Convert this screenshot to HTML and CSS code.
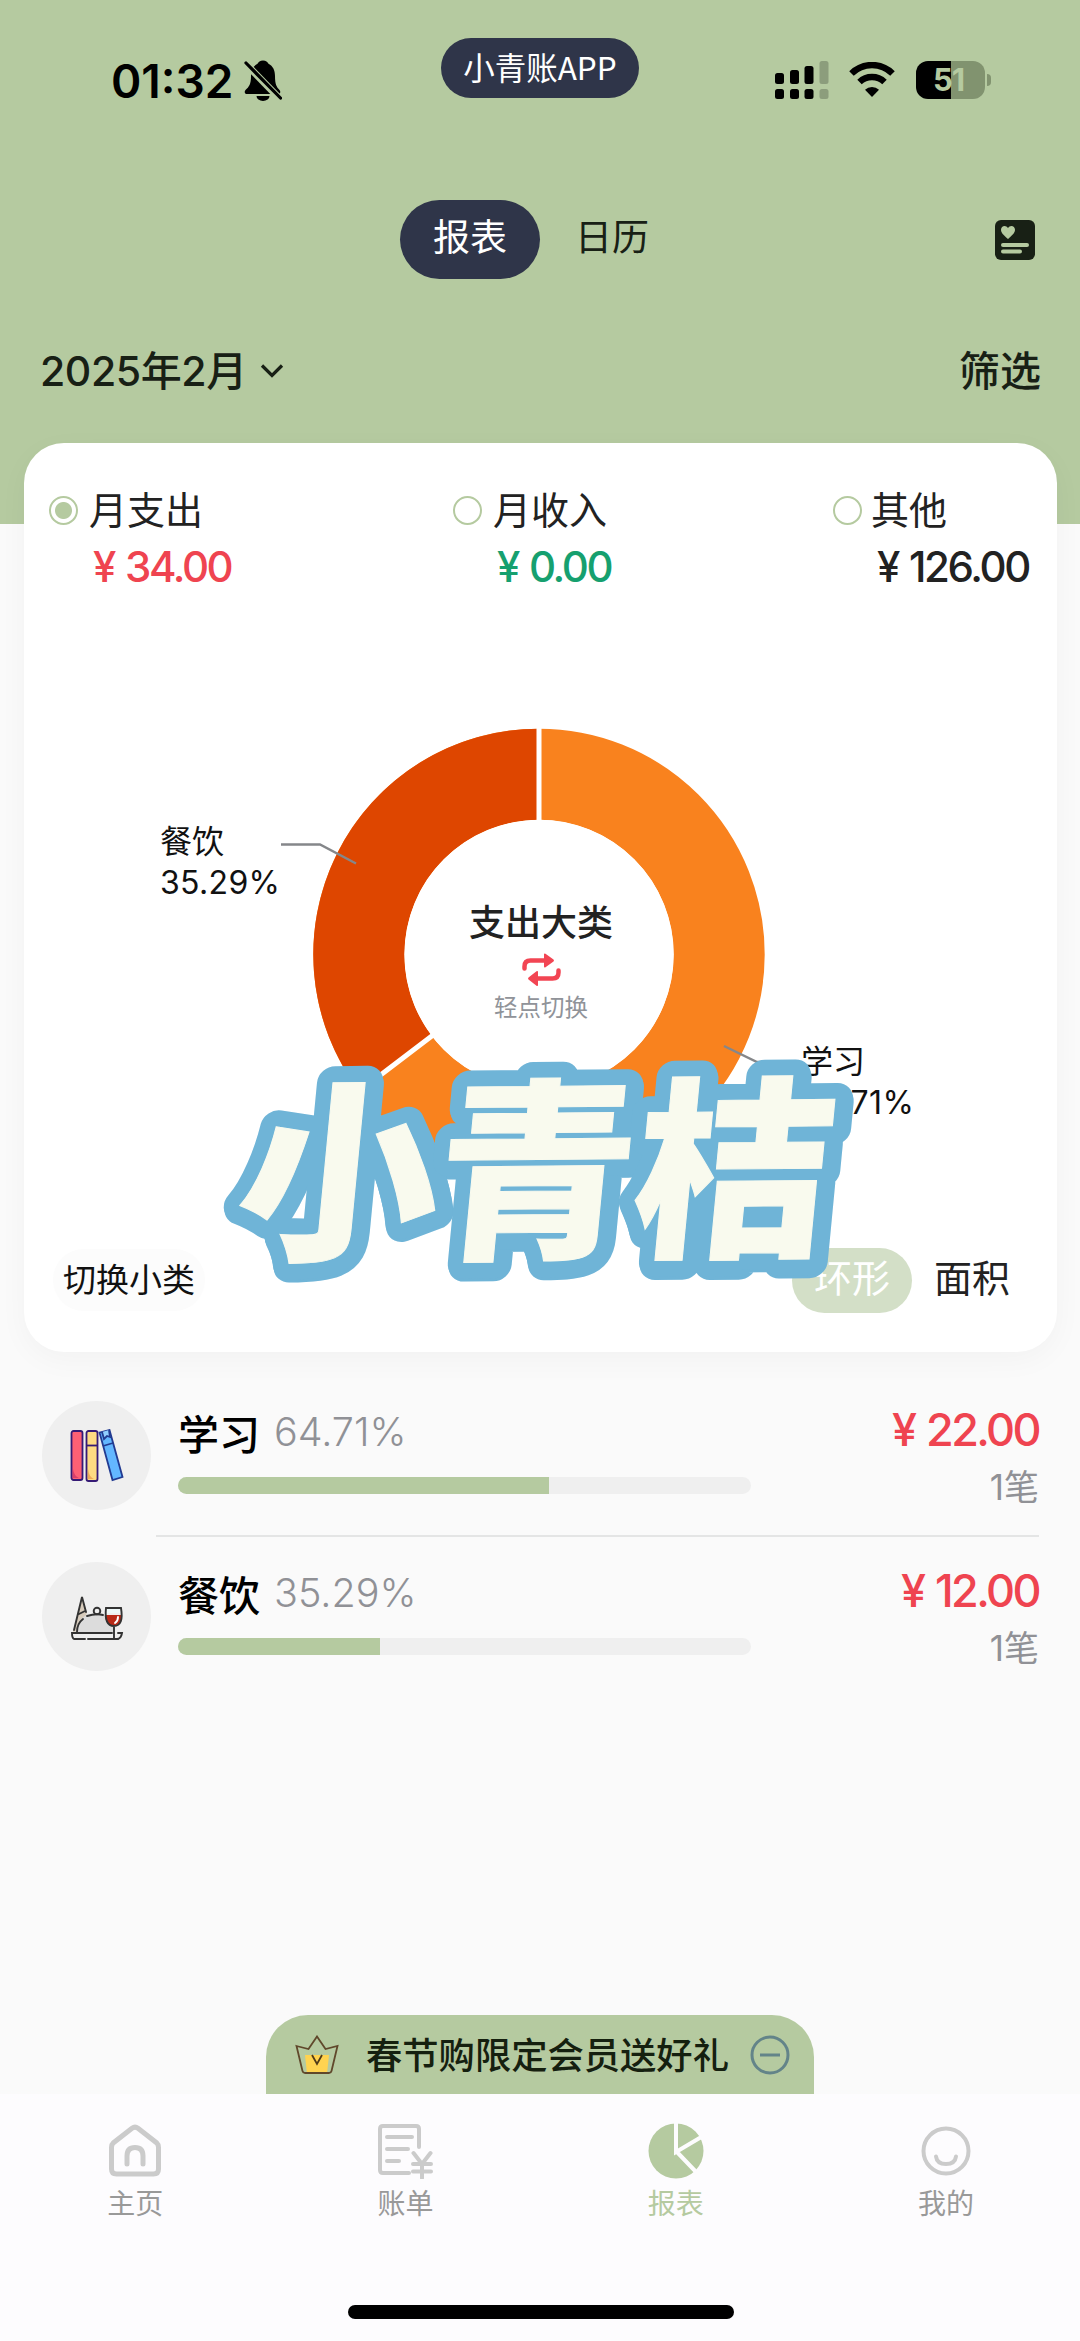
FILE: index.html
```html
<!DOCTYPE html>
<html lang="zh-CN">
<head>
<meta charset="utf-8">
<title>小青账</title>
<link rel="stylesheet" href="styles.css">
</head>
<body>
<div class="screen">
  <header class="top">
    <div class="status">
      <div class="clock">01:32
        <svg class="bell" viewBox="0 0 38 41" width="38" height="41"><path d="M19 .5c-3 0-4.500 1.500-5.500 3.300C9 6 7 10.500 7 16c0 8-2 11-5.500 14-1.500 1.700-.8 4 1.500 4h31c2.300 0 3-2.300 1.500-4-3-3-4.500-6-4.500-14 0-5.500-2-10-6.500-12.200C23.500 2 22 .5 19 .5zM12.500 36a6.500 5 0 0 0 13 0z"/><path class="slash-gap" d="M3 5l34 35"/><path class="slash" d="M2 3l34.500 35"/></svg>
      </div>
      <div class="app-pill">小青账APP</div>
      <div class="signals">
        <svg width="54" height="38" viewBox="0 0 54 38"><g><rect x="0" y="12" width="9" height="11" rx="2.500"/><rect x="15" y="9" width="9" height="14" rx="2.500"/><rect x="29.500" y="5" width="9" height="18" rx="2.500"/><rect x="0" y="28" width="9" height="10" rx="2.500"/><rect x="15" y="28" width="9" height="10" rx="2.500"/><rect x="29.500" y="28" width="9" height="10" rx="2.500"/></g><g opacity=".22"><rect x="44.500" y="0" width="9" height="23" rx="2.500"/><rect x="44.500" y="28" width="9" height="10" rx="2.500"/></g></svg>
        <svg width="46" height="36" viewBox="0 0 46 36"><g fill="none" stroke="#000" stroke-width="6.400"><path d="M2.500 11.500a29 29 0 0 1 41 0"/><path d="M10.500 20a18 18 0 0 1 25 0"/></g><path d="M23 35l-7-7.200a10 10 0 0 1 14 0z"/></svg>
        <div class="battery"><span>51</span></div>
      </div>
    </div>
    <div class="tabs">
      <span class="tab tab-on">报表</span><span class="tab">日历</span>
      <svg class="card-icon" width="40" height="40" viewBox="0 0 40 40"><rect width="40" height="40" rx="6" fill="#182015"/><g fill="#b5caa0"><path d="M13 19C9 15.500 6 13 6 9.800 6 5.500 11 4.500 13 8c2-3.500 7-2.500 7 1.800C20 13 17 15.500 13 19z"/><rect x="6" y="23" width="28" height="4" rx="2"/><rect x="6" y="29.500" width="21" height="4" rx="2"/></g></svg>
    </div>
    <div class="filter">
      <span class="month">2025年2月</span>
      <svg class="chev" width="24" height="16" viewBox="0 0 24 16"><path d="M2 2.500l10 10 10-10"/></svg>
      <span class="choose">筛选</span>
    </div>
  </header>

  <main>
    <section class="card">
      <div class="totals">
        <div class="total"><i class="radio on"></i><b>月支出</b><em class="red"><u>¥</u>34.00</em></div>
        <div class="total"><i class="radio"></i><b>月收入</b><em class="green"><u>¥</u>0.00</em></div>
        <div class="total"><i class="radio"></i><b>其他</b><em><u>¥</u>126.00</em></div>
      </div>
      <svg class="chart" width="1033" height="600" viewBox="24 640 1033 600">
        <circle cx="539" cy="954.400" r="180.200" fill="none" stroke="#f9821e" stroke-width="91"/>
        <path d="M539 728.700A225.700 225.700 0 0 0 359.400 1091.100L431.900 1035.900A134.600 134.600 0 0 1 539 819.800z" fill="#de4600"/>
        <path d="M539 954.400V720M539 954.400L353 1096" stroke="#fff" stroke-width="5"/>
        <circle cx="539" cy="954.400" r="134.600" fill="#fff"/>
        <g fill="none" stroke="#85878a" stroke-width="2.500"><path d="M281 844.500h39l36 19M724 1046l33 16h40"/></g>
        <g class="chart-label"><text x="160" y="853">餐饮</text><text x="160" y="894" textLength="120">35.29%</text><text x="801" y="1073">学习</text><text x="801" y="1114" textLength="113">64.71%</text></g>
        <text class="chart-title" x="541" y="936">支出大类</text>
        <g class="swap" transform="translate(521 953)"><path class="line" d="M3.500 15.500v-2q0-6 6-6h15M37.500 17.500v2q0 6-6 6H15"/><path d="M23 1.500q0-1.500 1.500-.8l8 5.800q1 1 0 2l-8 5.800q-1.500.7-1.500-.8zM17 19q0-1.500-1.500-.8l-8 6.300q-1 1 0 2l8 6.300q1.500.7 1.500-.8z"/></g>
        <text class="chart-sub" x="541" y="1016">轻点切换</text>
      </svg>
      <div class="actions">
        <span class="switch">切换小类</span><span class="ring">环形</span><span class="area">面积</span>
      </div>
      <svg class="brand" width="660" height="400" viewBox="210 960 660 400">
        <g transform="translate(333 1245) rotate(-.5) skewX(-6) scale(1.03 .99)">
          <g class="brand-edge"><text x="2" y="3">小</text><text x="194" y="3">青</text><text x="386" y="3">桔</text></g>
          <g class="brand-edge"><text x="1" y="0">小</text><text x="193" y="0">青</text><text x="385" y="0">桔</text></g>
          <g class="brand-fill"><text x="0" y="0">小</text><text x="192" y="0">青</text><text x="384" y="0">桔</text></g>
        </g>
      </svg>
    </section>

    <section class="list">
      <div class="row">
        <div class="avatar"><svg width="54" height="54" viewBox="0 0 54 54" stroke="#351a75" stroke-width="1.800"><rect x="1.500" y="2" width="11" height="49" rx="2" fill="#fd6074"/><path d="M3 40v9h6q-5-2-6-9z" fill="#d93f6b" stroke="none"/><rect x="16.500" y="2" width="11" height="50" rx="2" fill="#fedb82"/><path d="M16.500 16.500h11"/><path d="M18 40v10h6q-5-2-6-10z" fill="#efaa59" stroke="none"/><g stroke="#223b91"><path d="M29.500 3.500l10-2.500 13 47-10 3z" fill="#63b7ff"/><path d="M33 17l10-3"/><path d="M32 3l2 7 3-3 3 1-1-7" fill="#91cfff"/></g></svg></div>
        <div class="mid"><div class="name"><b>学习</b><span class="p1">64.71%</span></div><div class="bar"><i style="width:64.71%"></i></div></div>
        <div class="right"><strong><u>¥</u>22.00</strong><span>1笔</span></div>
      </div>
      <div class="row">
        <div class="avatar"><svg width="54" height="54" viewBox="0 0 54 54" fill="none" stroke="#333" stroke-width="1.900" stroke-linecap="round"><path d="M3 42L12 6l5 17-8 18z" fill="#d7cbbb" stroke="none"/><path d="M4 40L12 7l4 15M9 24l6-3"/><path d="M6 43c0-13 8-19 20-19s19 7 19 19z" fill="#dcdcdc" stroke="none"/><path d="M7 42c0-5 2-10 6-13M17 26q9-3 16-1"/><circle cx="27" cy="21" r="3.300"/><path d="M35 25h17c0 7-3 11-8 11s-9-4-9-11z" fill="#b92917" stroke="none"/><path d="M36 18h15q3 18-7 18t-8-18zM44 36v12M40 49h8"/><path d="M37 19h13v4H37z" fill="#eef8f8" stroke="none"/><path d="M48 27q0 4-3 6" stroke="#fff"/><path d="M15 49H4q-2-1-2-6h40M18 49h29q4 0 5-6h-4"/></svg></div>
        <div class="mid"><div class="name"><b>餐饮</b><span>35.29%</span></div><div class="bar"><i style="width:35.29%"></i></div></div>
        <div class="right"><strong><u>¥</u>12.00</strong><span>1笔</span></div>
      </div>
    </section>
  </main>

  <div class="promo">
    <svg width="44" height="40" viewBox="0 0 44 40"><path d="M10 20h24l-2 19H12z" fill="#ffd350"/><path d="M1.500 11l12 3L22 1.500 30.500 14l12-3-6 25q-.5 2-2.500 2H10q-2 0-2.500-2z" fill="none" stroke="#60482b" stroke-width="1.800"/><path d="M17 20l5 9 5-9" fill="none" stroke="#503a18" stroke-width="1.800"/></svg>
    <span>春节购限定会员送好礼</span>
    <svg width="40" height="40" viewBox="0 0 40 40" fill="none" stroke="#638489" stroke-width="3"><circle cx="20" cy="20" r="18"/><path d="M10 20h20"/></svg>
  </div>

  <nav class="nav">
    <div class="items">
      <div class="item"><svg width="56" height="56" viewBox="0 0 56 56"><path d="M4.500 24.500q0-3 2-4.800L25 5.200q3-2.200 6 0l18.500 14.500q2 1.800 2 4.800V46q0 5-5 5h-37q-5 0-5-5z"/><path d="M20 41V33q0-8.500 8-8.500t8 8.500v8"/></svg>主页</div>
      <div class="item"><svg class="thin" width="56" height="56" viewBox="0 0 56 56"><path d="M42 24V6q0-3-3-3H6Q3 3 3 6v41q0 3 3 3h26M10 14h25M10 26h21M10 38h12M36.500 30l8.500 11 8.500-11M36 41h18M36 48.500h18M45 41v14"/></svg>账单</div>
      <div class="item on"><svg width="56" height="56" viewBox="0 0 56 56"><circle class="disk" cx="28" cy="28" r="27.500"/><path class="cut" d="M28 0v29l27-16M28 28l22 23"/></svg>报表</div>
      <div class="item"><svg class="thin" width="56" height="56" viewBox="0 0 56 56"><circle cx="28" cy="28" r="22.500"/><path d="M18 33.500q1 7.500 10 7.500t10-7.500"/></svg>我的</div>
    </div>
    <div class="home"></div>
  </nav>
</div>
</body>
</html>
```
FILE: styles.css
```css
* { box-sizing: border-box; }
body { margin: 0; background: #fafafa; font-family: Inter, "Noto Sans CJK SC", sans-serif; color: #222; }
b, em, i, strong { font-style: normal; font-weight: 400; }
u { text-decoration: none; }
svg { display: block; flex: none; }
.screen { width: 1080px; height: 2341px; overflow: hidden; display: flex; flex-direction: column; background: #fafafa; }

.top { height: 524px; flex: none; background: #b5caa0; color: #182015; }
.status { height: 136px; display: grid; grid-template-columns: 441px 198px 1fr; color: #000; }
.clock { display: flex; align-items: center; gap: 11px; padding: 25px 0 0 111px; font-size: 46px; font-weight: 600; height: 136px; white-space: nowrap; }
.slash { fill: none; stroke: #000; stroke-width: 3.200; stroke-linecap: round; }
.slash-gap { fill: none; stroke: #b5caa0; stroke-width: 7; }
.app-pill { margin-top: 38px; height: 60px; border-radius: 30px; background: #2f3549; color: #fff; font: 400 31.500px/57px "Noto Sans CJK SC", sans-serif; text-align: center; white-space: nowrap; }
.signals { display: flex; align-items: flex-start; padding: 61px 0 0 136px; }
.signals svg:nth-child(2) { margin: 1px 0 0 20px; }
.battery { position: relative; width: 69px; height: 38px; margin-left: 21px; border-radius: 12px; background: linear-gradient(90deg, #000 51%, #81936f 51%); color: #b5caa0; font-size: 31px; font-weight: 700; line-height: 38px; text-align: center; letter-spacing: -1px; }
.battery span { margin-right: 4px; }
.battery::after { content: ""; position: absolute; left: 71px; top: 13px; width: 4px; height: 12px; border-radius: 0 4px 4px 0; background: #81936f; }

.tabs { display: flex; align-items: center; margin-top: 63px; height: 80px; padding: 0 45px 0 400px; font: 400 37px/1 "Noto Sans CJK SC", sans-serif; }
.tab { padding-bottom: 7px; margin-left: 35px; }
.tab-on { width: 140px; height: 79px; margin: 0; padding: 0; border-radius: 40px; background: #2f3549; color: #fff; line-height: 71px; text-align: center; }
.card-icon { margin: 2px 0 0 auto; }
.filter { display: flex; align-items: center; height: 60px; margin-top: 62px; padding: 0 39px 0 40px; font-size: 41px; line-height: 60px; }
.month { width: 205px; white-space: nowrap; font-weight: 500; font-size: 41px; letter-spacing: -.4px; }
.chev { margin-left: 15px; fill: none; stroke: #182015; stroke-width: 3.200; }
.choose { margin-left: auto; font-weight: 500; }

.card { position: relative; width: 1033px; height: 909px; margin: -81px 0 0 24px; border-radius: 40px; background: #fff; box-shadow: 0 8px 30px rgba(0,0,0,.035); }
.totals { height: 197px; padding-top: 40px; display: grid; grid-template-columns: 404px 380px 1fr; }
.total { display: grid; grid-template-columns: 41px 1fr; grid-template-rows: 54px 58px; align-content: start; padding-left: 25px; align-items: center; }
.radio { width: 29px; height: 29px; border: 2.500px solid #b5caa0; border-radius: 50%; }
.on.radio { background: radial-gradient(circle, #b5caa0 8px, #fff 9px); }
.total b { font-size: 38px; line-height: 54px; white-space: nowrap; margin: -1px 0 0 -1px; }
.total:nth-child(3) b { margin-left: -3px; }
.total em { grid-column: 2; padding: 2px 0 0 3px; font-size: 42px; font-weight: 500; line-height: 58px; letter-spacing: -2.400px; white-space: nowrap; }
.total u { display: inline-block; width: 32px; }
.red { color: #ef4450; }
.green { color: #16a06f; }
.chart { height: 600px; }
.chart-label { font-size: 32px; fill: #111; }
.chart-title { font-size: 36px; font-weight: 500; text-anchor: middle; fill: #222; }
.chart-sub { font-size: 23.500px; text-anchor: middle; fill: #909399; }
.swap { fill: #f24553; }
.swap .line { fill: none; stroke: #f24553; stroke-width: 4.500; stroke-linecap: round; }
.actions { display: flex; align-items: center; height: 66px; margin-top: 7px; padding: 0 47px 0 29px; }
.switch { width: 152px; height: 62px; border-radius: 31px; background: #fcfcfc; font-size: 33px; line-height: 62px; text-align: center; color: #111; white-space: nowrap; }
.ring { width: 120px; height: 65px; margin-left: auto; border-radius: 33px; background: #d3dfc7; color: #fff; font-size: 38px; line-height: 60px; text-align: center; }
.area { margin-left: 22px; font-size: 38px; line-height: 60px; margin-top: -5px; }
.brand { position: absolute; left: 186px; top: 517px; overflow: visible; }
.brand text { font: 900 195px/1 "Noto Sans CJK SC", sans-serif; text-anchor: middle; }
.brand-edge { fill: #6fb4d7; stroke: #6fb4d7; stroke-width: 33; stroke-linejoin: round; }
.brand-fill { fill: #f9faee; stroke: #f9faee; stroke-width: 1; }

.list { padding: 22px 41px 0 42px; }
.row { position: relative; display: flex; height: 161px; padding-top: 27px; }
.row + .row::before { content: ""; position: absolute; left: 114px; right: 0; top: 0; height: 2px; background: #e4e5e5; }
.avatar { display: flex; align-items: center; justify-content: center; width: 109px; height: 109px; border-radius: 50%; background: #efefef; }
.mid { width: 573px; margin-left: 27px; }
.name { display: flex; align-items: center; height: 62px; font-size: 41px; color: #000; }
.name b { width: 96px; font-weight: 500; margin-top: -1px; }
.name span { color: #909196; font-size: 39.500px; font-weight: 350; }
.bar { height: 17px; margin-top: 14px; border-radius: 9px; overflow: hidden; background: #efefef; }
.bar i { display: block; height: 100%; background: #b5caa0; }
.right { display: flex; flex-direction: column; align-items: flex-end; margin-left: auto; }
.right strong { color: #ef4450; font-size: 45px; font-weight: 500; line-height: 58px; letter-spacing: -2.600px; white-space: nowrap; }
.right u { display: inline-block; width: 34px; }
.right span { color: #909196; font-size: 35px; line-height: 57px; }

.promo { display: flex; align-items: center; width: 548px; height: 79px; margin: auto 0 0 266px; padding: 0 24px 0 29px; border-radius: 42px 42px 0 0; background: #b5caa0; color: #15200f; font-size: 36.300px; font-weight: 500; white-space: nowrap; }
.promo span { margin: -4px auto 0 27px; }
.nav { flex: none; height: 247px; padding-top: 29px; background: #fdfcfe; }
.items { display: grid; grid-template-columns: repeat(4, 270.300px); }
.item { display: flex; flex-direction: column; align-items: center; color: #999; font-size: 28px; line-height: 40px; gap: 5px; }
.item svg { fill: none; stroke: #cbcbcb; stroke-width: 5; stroke-linecap: round; }
.item .thin { stroke-width: 4; }
.item.on { color: #b5caa0; }
.item .disk { fill: #b5caa0; stroke: none; }
.item .cut { stroke: #fdfcfe; stroke-width: 4; stroke-linecap: butt; }
.home { width: 386px; height: 14px; margin: 81px 0 0 348px; border-radius: 7px; background: #000; }
```
